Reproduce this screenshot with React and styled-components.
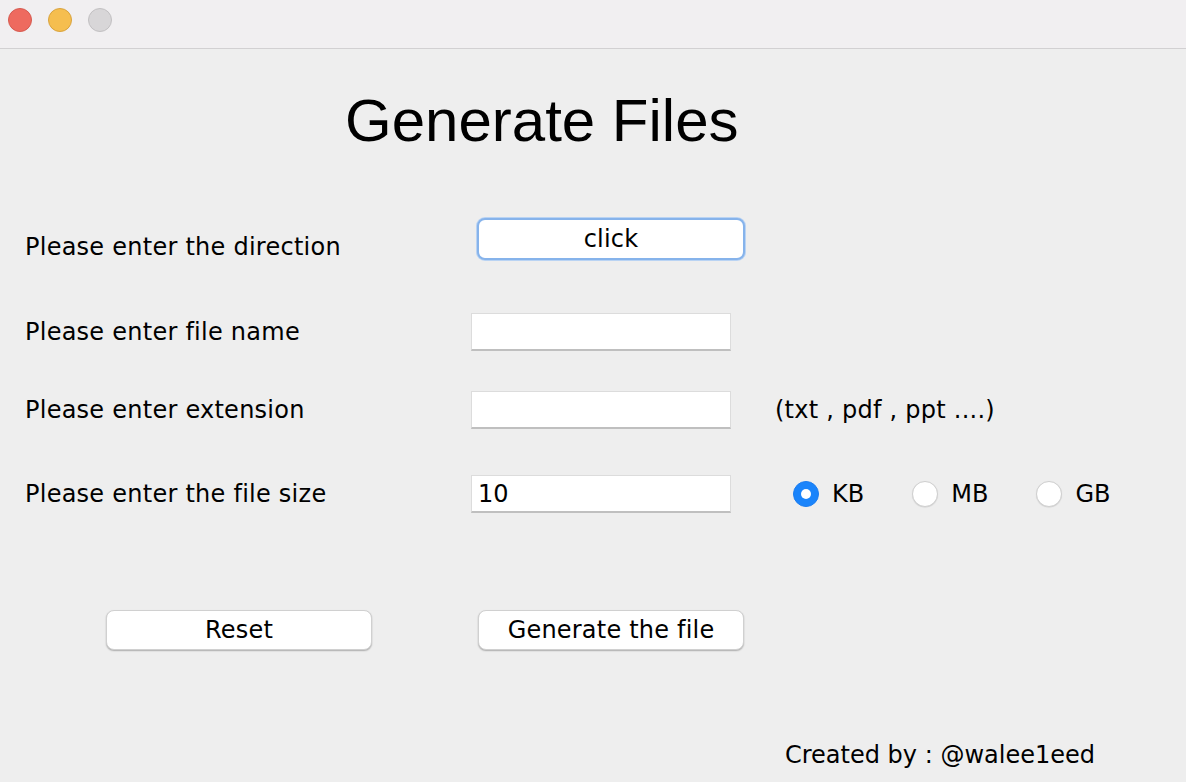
import React, { useState } from 'react';
import styled, { createGlobalStyle } from 'styled-components';

const GlobalStyle = createGlobalStyle`
  html, body {
    margin: 0;
    padding: 0;
    background: #eeeeee;
  }
  body {
    font-family: "DejaVu Sans", "Liberation Sans", sans-serif;
    color: #000;
  }
`;

const Window = styled.div`
  width: 1186px;
  height: 782px;
  background: #eeeeee;
  overflow: hidden;
`;

const TitleBar = styled.div`
  height: 48px;
  background: #f1eff1;
  border-bottom: 1px solid #d2d0d2;
  display: flex;
  align-items: center;
  gap: 16px;
  padding-left: 8px;
`;

const Light = styled.span`
  width: 24px;
  height: 24px;
  border-radius: 50%;
  box-sizing: border-box;
  background: ${p => p.$fill};
  border: 1px solid ${p => p.$edge};
  margin-top: -8px;
`;

const Content = styled.div`
  display: flex;
  flex-direction: column;
`;

const Title = styled.h1`
  margin: 42px 0 0 345px;
  font-family: "Liberation Sans", Arial, sans-serif;
  font-weight: 400;
  font-size: 60px;
  line-height: 60px;
`;

const Row = styled.div`
  display: grid;
  grid-template-columns: 446px 260px auto;
  align-items: center;
  padding-left: 25px;
  height: ${p => p.$h}px;
  margin-top: ${p => p.$top}px;
`;

const Label = styled.span`
  font-size: 24px;
  line-height: 28px;
  letter-spacing: 0.25px;
  padding-top: ${p => p.$drop || 0}px;
  white-space: nowrap;
`;

const Field = styled.input`
  box-sizing: border-box;
  width: 260px;
  height: 38px;
  margin: 0;
  padding: 0 6px;
  background: #fff;
  border: 1px solid #dcdcdc;
  border-bottom: 2px solid #bfbfbf;
  font-family: "DejaVu Sans", sans-serif;
  font-size: 24px;
  color: #000;
  outline: none;
`;

const PushButton = styled.button`
  box-sizing: border-box;
  width: ${p => p.$w || 266}px;
  height: ${p => p.$hgt || 40}px;
  margin: 0 0 0 ${p => p.$left || 0}px;
  padding: 0;
  background: #fff;
  border-radius: 8px;
  border: ${p => (p.$focused ? '2px solid #86b3eb' : '1px solid #d0d0d0')};
  box-shadow: ${p => (p.$focused ? '0 0 0 1px #b9d3f3' : '0 1px 1.5px rgba(0,0,0,0.28)')};
  font-family: "DejaVu Sans", sans-serif;
  font-size: 24px;
  line-height: 28px;
  letter-spacing: 0.2px;
  color: #000;
  cursor: pointer;
`;

const Hint = styled.span`
  font-size: 24px;
  line-height: 28px;
  letter-spacing: 0.25px;
  margin-left: 44px;
  white-space: nowrap;
`;

const RadioGroup = styled.div`
  display: flex;
  align-items: center;
  gap: 48px;
  margin-left: 62px;
`;

const RadioOption = styled.label`
  display: flex;
  align-items: center;
  gap: 13px;
  font-size: 24px;
  line-height: 28px;
  cursor: pointer;
`;

const RadioDot = styled.span`
  box-sizing: border-box;
  width: 26px;
  height: 26px;
  border-radius: 50%;
  display: flex;
  align-items: center;
  justify-content: center;
  background: ${p => (p.$on ? '#1a84fb' : '#fff')};
  border: 1px solid ${p => (p.$on ? '#1a7cf0' : '#cfcfcf')};
  box-shadow: ${p => (p.$on ? 'none' : '0 0.5px 1px rgba(0,0,0,0.12)')};

  &::after {
    content: '';
    width: 10px;
    height: 10px;
    border-radius: 50%;
    background: #fff;
    display: ${p => (p.$on ? 'block' : 'none')};
  }
`;

const ActionRow = styled.div`
  display: flex;
  margin: 97px 0 0 106px;
  gap: 106px;
`;

const Credit = styled.div`
  margin: 91px 0 0 785px;
  font-size: 24px;
  line-height: 28px;
  white-space: nowrap;
`;

const units = ['KB', 'MB', 'GB'];

export default function App() {
  const [unit, setUnit] = useState('KB');
  const [name, setName] = useState('');
  const [ext, setExt] = useState('');
  const [size, setSize] = useState('10');

  return (
    <Window>
      <GlobalStyle />
      <TitleBar>
        <Light $fill="#ee6a5f" $edge="#d65a50" />
        <Light $fill="#f5be4f" $edge="#d9a33e" />
        <Light $fill="#d8d6d8" $edge="#c2c0c2" />
      </TitleBar>
      <Content>
        <Title>Generate Files</Title>

        <Row $h={42} $top={66}>
          <Label $drop={16}>Please enter the direction</Label>
          <PushButton $w={268} $hgt={42} $left={6} $focused>click</PushButton>
        </Row>

        <Row $h={38} $top={54}>
          <Label>Please enter file name</Label>
          <Field value={name} onChange={e => setName(e.target.value)} />
        </Row>

        <Row $h={38} $top={40}>
          <Label>Please enter extension</Label>
          <Field value={ext} onChange={e => setExt(e.target.value)} />
          <Hint>(txt , pdf , ppt ....)</Hint>
        </Row>

        <Row $h={38} $top={46}>
          <Label>Please enter the file size</Label>
          <Field value={size} onChange={e => setSize(e.target.value)} />
          <RadioGroup>
            {units.map(u => (
              <RadioOption key={u} onClick={() => setUnit(u)}>
                <RadioDot $on={unit === u} />
                {u}
              </RadioOption>
            ))}
          </RadioGroup>
        </Row>

        <ActionRow>
          <PushButton>Reset</PushButton>
          <PushButton>Generate the file</PushButton>
        </ActionRow>

        <Credit>Created by : @walee1eed</Credit>
      </Content>
    </Window>
  );
}
